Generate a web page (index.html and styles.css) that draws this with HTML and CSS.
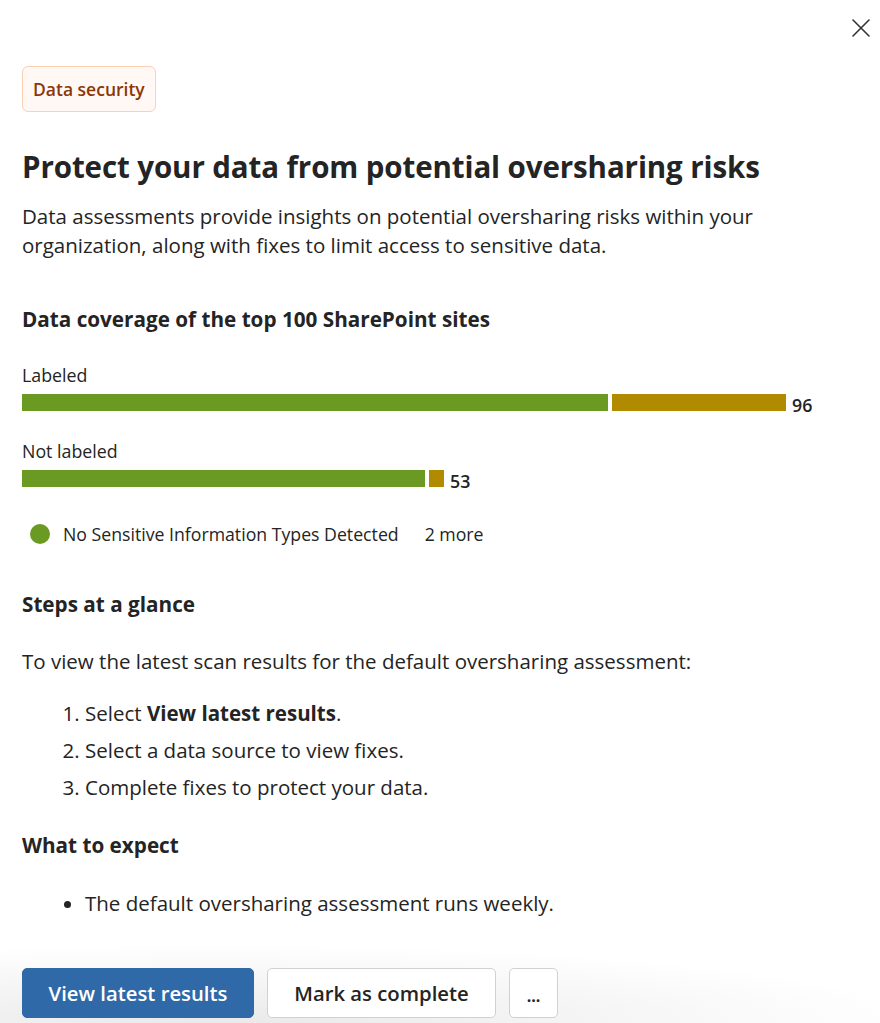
FILE: index.html
```html
<!DOCTYPE html>
<html lang="en">
<head>
<meta charset="utf-8">
<title>Data security</title>
<link rel="stylesheet" href="styles.css">
</head>
<body>
<div class="panel">
  <div class="topbar">
    <button class="close" aria-label="Close">
      <svg width="18" height="18" viewBox="0 0 18 18"><path d="M1 1 L17 17 M17 1 L1 17" stroke="#333" stroke-width="1.6" fill="none" stroke-linecap="round"/></svg>
    </button>
  </div>
  <div class="content">
    <span class="badge">Data security</span>
    <h1 class="title">Protect your data from potential oversharing risks</h1>
    <p class="desc">Data assessments provide insights on potential oversharing risks within your organization, along with fixes to limit access to sensitive data.</p>

    <h2 class="subhead coverage">Data coverage of the top 100 SharePoint sites</h2>
    <div class="chart">
      <div class="row">
        <div class="row-label">Labeled</div>
        <div class="bar">
          <span class="seg green" style="width:586px"></span>
          <span class="seg gold" style="width:174px"></span>
          <span class="value">96</span>
        </div>
      </div>
      <div class="row">
        <div class="row-label">Not labeled</div>
        <div class="bar">
          <span class="seg green" style="width:403px"></span>
          <span class="seg gold" style="width:15px"></span>
          <span class="value">53</span>
        </div>
      </div>
    </div>
    <div class="legend">
      <span class="dot"></span>
      <span class="legend-text">No Sensitive Information Types Detected</span>
      <span class="legend-more">2 more</span>
    </div>

    <h2 class="subhead steps">Steps at a glance</h2>
    <p class="intro">To view the latest scan results for the default oversharing assessment:</p>
    <ol class="list">
      <li>Select <b>View latest results</b>.</li>
      <li>Select a data source to view fixes.</li>
      <li>Complete fixes to protect your data.</li>
    </ol>

    <h2 class="subhead expect">What to expect</h2>
    <ul class="bullets">
      <li>The default oversharing assessment runs weekly.</li>
    </ul>
  </div>
  <div class="footer">
    <button class="btn primary">View latest results</button>
    <button class="btn secondary">Mark as complete</button>
    <button class="btn more">...</button>
  </div>
</div>
</body>
</html>
```
FILE: styles.css
```css
* { box-sizing: border-box; }
html, body { margin: 0; padding: 0; background: #fff; }
body {
  font-family: "Open Sans", "Noto Sans", sans-serif;
  color: #242424;
  width: 880px;
  height: 1023px;
  overflow: hidden;
}
.panel {
  display: flex;
  flex-direction: column;
  height: 1023px;
}
.topbar {
  display: flex;
  justify-content: flex-end;
  padding: 19px 10px 0 0;
}
.close {
  width: 18px; height: 18px;
  padding: 0; border: 0; background: none;
  display: flex;
}
.content {
  flex: 1;
  padding: 0 22px;
}
.badge {
  display: inline-block;
  margin-top: 29px;
  height: 46px;
  line-height: 44px;
  padding: 0 10px;
  border: 1px solid #fdcfb4;
  border-radius: 6px;
  background: #fff8f5;
  color: #8a3707;
  font-size: 17.5px;
  font-weight: 600;
}
.title {
  margin: 35px 0 0;
  font-size: 29.5px;
  line-height: 40px;
  font-weight: 700;
  letter-spacing: -0.1px;
}
.desc {
  margin: 15px 0 0;
  font-size: 20.5px;
  line-height: 29px;
}
.subhead {
  margin: 0;
  font-size: 20.7px;
  line-height: 28px;
  font-weight: 700;
}
.coverage { margin-top: 45px; }
.chart { margin-top: 30px; }
.row + .row { margin-top: 28px; }
.row-label {
  font-size: 17.8px;
  line-height: 24px;
}
.bar {
  display: flex;
  align-items: center;
  gap: 4px;
  height: 17px;
  margin-top: 7px;
}
.seg { height: 17px; display: block; }
.green { background: #6a9a22; }
.gold { background: #b08b00; }
.value {
  margin-left: 2px;
  font-size: 17.8px;
  font-weight: 600;
  line-height: 18px;
  padding-top: 5px;
}
.legend {
  display: flex;
  align-items: center;
  margin-top: 35px;
  margin-left: 8px;
  font-size: 17.7px;
  line-height: 24px;
}
.dot {
  width: 20px; height: 20px;
  border-radius: 50%;
  background: #6a9a22;
  margin-right: 13px;
}
.legend-more { margin-left: 26px; }
.steps { margin-top: 44px; }
.intro {
  margin: 29px 0 0;
  font-size: 20.5px;
  line-height: 29px;
}
.list {
  margin: 19px 0 0;
  padding-left: 63px;
  font-size: 20.5px;
  line-height: 37px;
}
.list b { font-weight: 700; }
.expect { margin-top: 25px; }
.bullets {
  margin: 30px 0 0;
  padding-left: 63px;
  font-size: 20.5px;
  line-height: 29px;
}
.footer {
  display: flex;
  gap: 13px;
  padding: 0 22px 5px;
  height: 78px;
  align-items: flex-end;
  background:
    radial-gradient(ellipse 80% 100% at 25% 100%, rgba(232,232,232,0.95) 0%, rgba(255,255,255,0) 100%);
}
.btn {
  height: 50px;
  border-radius: 5px;
  font-family: inherit;
  font-size: 20.3px;
  padding: 0;
  cursor: pointer;
}
.primary {
  width: 232px;
  background: #2f69a8;
  color: #fff;
  border: 1px solid #2f69a8;
  font-weight: 600;
}
.secondary {
  width: 229px;
  background: #fff;
  color: #242424;
  border: 1px solid #d1d1d1;
  font-weight: 600;
}
.more {
  width: 49px;
  background: #fff;
  color: #242424;
  border: 1px solid #d1d1d1;
  font-weight: 700;
  font-size: 16px;
  padding-top: 6px;
}
```
